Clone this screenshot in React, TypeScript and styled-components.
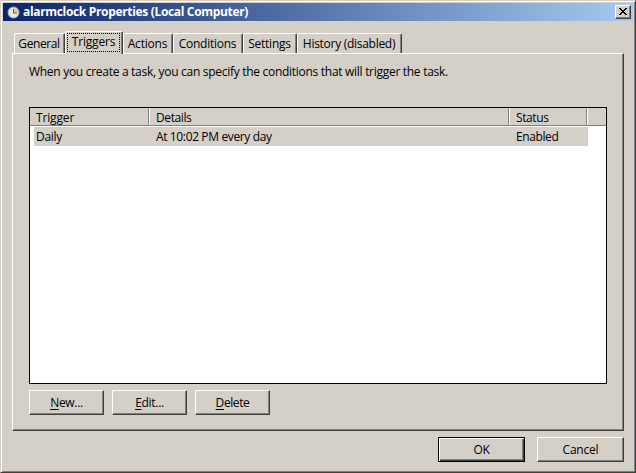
import React from "react";
import styled, { createGlobalStyle } from "styled-components";

const face = "#d4d0c8";

const GlobalStyle = createGlobalStyle`
  * { box-sizing: border-box; }
  body {
    margin: 0;
    overflow: hidden;
    background: ${face};
    color: #000;
    font: 12px/16px "Open Sans", "Noto Sans", sans-serif;
  }
`;

const Dialog = styled.main`
  width: 636px;
  height: 473px;
  display: flex;
  flex-direction: column;
  padding: 2px 1px 0 1px;
  background: ${face};
  border: 1px solid;
  border-color: ${face} #404040 #404040 ${face};
  box-shadow: inset 1px 1px #fff, inset -1px -1px #808080;
`;

const TitleBar = styled.header`
  height: 18px;
  margin: 0 1px;
  padding: 0 2px 0 4px;
  display: flex;
  align-items: center;
  background: linear-gradient(90deg, #0a246a, #a6caf0);
`;

const Title = styled.h1`
  flex: 1;
  margin: 0 0 0 3px;
  color: #fff;
  font-size: 12px;
  font-weight: 700;
  line-height: 18px;
  white-space: nowrap;
`;

const Label = styled.span<{ $track?: number }>`
  display: inline-block;
  white-space: pre;
  letter-spacing: ${(p) => p.$track ?? 0}px;
`;

const CloseButton = styled.button`
  width: 16px;
  height: 14px;
  padding: 2px 0 0 3px;
  display: flex;
  justify-content: flex-start;
  align-items: flex-start;
  background: ${face};
  border: 1px solid;
  border-color: #fff #404040 #404040 #fff;
  box-shadow: inset -1px -1px #808080;
`;

const TabList = styled.nav`
  height: 22px;
  margin: 10px 0 0 12px;
  display: flex;
  align-items: flex-end;
`;

const Tab = styled.button<{ $width: number; $active?: boolean }>`
  position: relative;
  z-index: ${(p) => (p.$active ? 1 : 0)};
  flex: none;
  width: ${(p) => p.$width}px;
  height: ${(p) => (p.$active ? 23 : 20)}px;
  margin-bottom: ${(p) => (p.$active ? -1 : 0)}px;
  padding: ${(p) => (p.$active ? "1px 2px 3px 1px" : "2px 1px 0 0")};
  display: flex;
  justify-content: center;
  font: inherit;
  color: #000;
  background: ${face};
  border: solid;
  border-width: 1px 1px 0 1px;
  border-color: #fff #404040 #fff #fff;
  border-radius: 2px 2px 0 0;
  box-shadow: inset -1px 0 #808080;
`;

const FocusFrame = styled.span`
  width: 100%;
  height: 19px;
  border: 1px dotted #000;
  line-height: 16px;
`;

const TabPanel = styled.section`
  width: 612px;
  height: 378px;
  margin-left: 10px;
  padding: 9px 0 0 16px;
  border: 1px solid;
  border-color: #fff #404040 #404040 #fff;
  box-shadow: inset -1px -1px #808080;
`;

const Hint = styled.p`
  height: 44px;
  margin: 0;
  line-height: 18px;
`;

const ListView = styled.div`
  width: 578px;
  height: 277px;
  background: #fff;
  border: 1px solid #000;
`;

const HeaderRow = styled.div`
  display: grid;
  grid-template-columns: 119px 360px 78px 19px;
  grid-template-rows: 17px;
  height: 18px;
  background: ${face};
  border-bottom: 1px solid #808080;
`;

const HeaderCell = styled.div`
  height: 17px;
  padding: 1px 0 0 6px;
  line-height: 18px;
  border-right: 1px solid #808080;
  & + & { border-left: 1px solid #fff; }
  &:last-child { border-right: 0; }
  & > span { height: 16px; }
`;

const ItemRow = styled.div`
  display: grid;
  grid-template-columns: 120px 360px 74px;
  width: 554px;
  height: 19px;
  margin: 1px 0 0 4px;
  padding-left: 2px;
  line-height: 20px;
  background: ${face};
`;

const Actions = styled.div`
  display: flex;
  gap: 8px;
  margin-top: 6px;
`;

const Footer = styled.footer`
  display: flex;
  justify-content: flex-end;
  gap: 12px;
  margin: 6px 10px 0 0;
`;

const Button = styled.button<{ $width: number; $default?: boolean }>`
  width: ${(p) => p.$width}px;
  height: 25px;
  padding: 0;
  font: inherit;
  line-height: 23px;
  color: #000;
  background: ${face};
  border: 1px solid;
  border-color: ${(p) => (p.$default ? "#000" : "#fff #404040 #404040 #fff")};
  box-shadow: ${(p) =>
    p.$default
      ? "inset 1px 1px #fff, inset -1px -1px #404040, inset -2px -2px #808080"
      : "inset -1px -1px #808080"};
`;

const Key = styled.span`
  text-decoration: underline;
  text-decoration-thickness: 1px;
  text-underline-offset: 2px;
`;

const ClockIcon = () => (
  <svg width="13" height="14" viewBox="0 0 13 14">
    <circle cx="6.5" cy="7.5" r="5.5" fill="#e6e9ea" stroke="#aaa99f" />
    <path d="M6.5 7.5V3a4.5 4.5 0 0 1 4.5 4.5z" fill="#f3c878" />
    <path d="M6.5 4v4h3.5" fill="none" stroke="#58564f" />
  </svg>
);

const CloseIcon = () => (
  <svg width="8" height="7" viewBox="0 0 8 7" shapeRendering="crispEdges">
    <path
      d="M0 0h2v1h1v1h2v-1h1v-1h2v1h-1v1h-1v1h-1v1h1v1h1v1h1v1h-2v-1h-1v-1h-2v1h-1v1h-2v-1h1v-1h1v-1h1v-1h-1v-1h-1v-1h-1z"
      fill="#000"
    />
  </svg>
);

export default function App() {
  return (
    <>
      <GlobalStyle />
      <Dialog>
        <TitleBar>
          <ClockIcon />
          <Title><Label $track={-0.33}>alarmclock Properties (Local Computer)</Label></Title>
          <CloseButton aria-label="Close"><CloseIcon /></CloseButton>
        </TitleBar>
        <TabList>
          <Tab $width={51}><Label $track={-0.4}>General</Label></Tab>
          <Tab $width={58} $active><FocusFrame><Label $track={-0.2}>Triggers</Label></FocusFrame></Tab>
          <Tab $width={50}><Label $track={-0.2}>Actions</Label></Tab>
          <Tab $width={70}><Label $track={-0.25}>Conditions</Label></Tab>
          <Tab $width={54}><Label $track={-0.25}>Settings</Label></Tab>
          <Tab $width={105}><Label $track={-0.28}>History (disabled)</Label></Tab>
        </TabList>
        <TabPanel>
          <Hint>
            <Label $track={-0.29}>When you create a task, you can specify the conditions that will trigger the task.</Label>
          </Hint>
          <ListView>
            <HeaderRow>
              <HeaderCell><Label $track={-0.15}>Trigger</Label></HeaderCell>
              <HeaderCell><Label $track={-0.4}>Details</Label></HeaderCell>
              <HeaderCell><Label $track={-0.4}>Status</Label></HeaderCell>
              <HeaderCell />
            </HeaderRow>
            <ItemRow>
              <Label $track={-0.3}>Daily</Label>
              <Label $track={-0.37}>At 10:02 PM every day</Label>
              <Label $track={-0.4}>Enabled</Label>
            </ItemRow>
          </ListView>
          <Actions>
            <Button $width={75}><Label $track={-0.3}><Key>N</Key>ew...</Label></Button>
            <Button $width={75}><Label $track={-0.3}><Key>E</Key>dit...</Label></Button>
            <Button $width={75}><Label $track={-0.4}><Key>D</Key>elete</Label></Button>
          </Actions>
        </TabPanel>
        <Footer>
          <Button $width={87} $default><Label $track={-0.3}>OK</Label></Button>
          <Button $width={87}><Label $track={-0.2}>Cancel</Label></Button>
        </Footer>
      </Dialog>
    </>
  );
}
